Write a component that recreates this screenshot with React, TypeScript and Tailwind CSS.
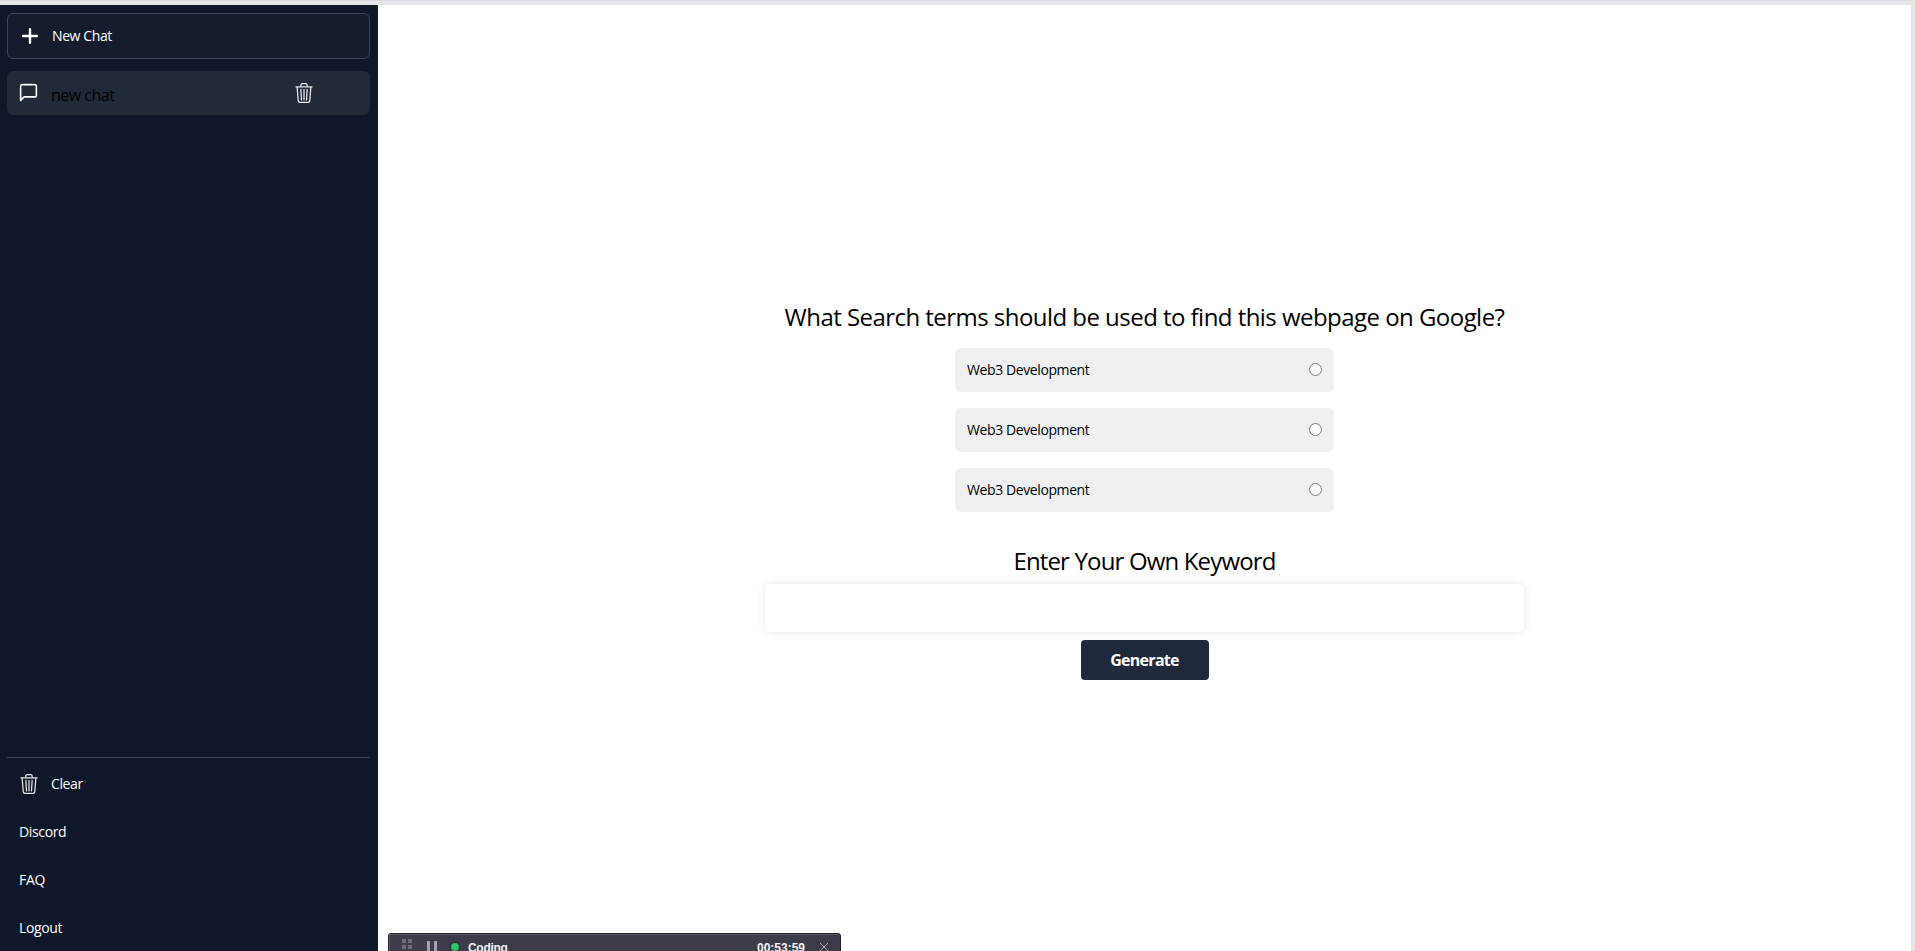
import React from "react";
import { BsTrash3 } from "react-icons/bs";
import { FiMessageSquare } from "react-icons/fi";

const links = ["Discord", "FAQ", "Logout"];
const keywords = ["Web3 Development", "Web3 Development", "Web3 Development"];

function PlusIcon() {
  return (
    <svg className="size-4" viewBox="0 0 16 16" stroke="currentColor" strokeWidth="2.4" strokeLinecap="round">
      <path d="M8 1.2V14.8M1.2 8H14.8" />
    </svg>
  );
}

function Sidebar() {
  return (
    <aside className="flex w-[378px] shrink-0 flex-col bg-[#0f172a] pl-[7px] pr-2 pt-2 text-sm text-white">
      <button className="flex h-[46px] shrink-0 items-center gap-[14px] rounded-md border border-[#3c4454] bg-[#141c2e] pl-[14px]">
        <PlusIcon />
        <span className="tracking-[-0.4px]">New Chat</span>
      </button>
      <div className="mt-3 flex h-11 shrink-0 items-center rounded-md bg-[#202a38] pl-[11px] pr-14">
        <FiMessageSquare className="mb-px size-[21px]" strokeWidth={1.8} />
        <span className="ml-3 mt-1 text-base tracking-[-0.5px] text-black">new chat</span>
        <BsTrash3 className="ml-auto size-5 text-gray-200" />
      </div>
      <nav className="mt-auto flex h-[194px] shrink-0 flex-col border-t border-[#3c4454] pl-3 pt-[2px]">
        <div className="flex h-12 shrink-0 items-center gap-[12px]">
          <BsTrash3 className="size-5 text-gray-200" />
          <span className="tracking-[-0.4px]">Clear</span>
        </div>
        {links.map((l) => (
          <div key={l} className="flex h-12 shrink-0 items-center tracking-[-0.35px]">
            {l}
          </div>
        ))}
      </nav>
    </aside>
  );
}

function TimerBar() {
  return (
    <div className="absolute left-[388px] top-[933px] flex h-7 w-[453px] items-center rounded-[3px] border border-[#232235] bg-[#3c3c4a] px-3 font-['Liberation_Sans'] text-xs font-bold text-gray-100 shadow-[inset_0_1px_0_#5c5b6c,inset_1px_0_0_#5c5b6c]">
      <div className="ml-px grid grid-cols-2 gap-[2px]">
        {[0, 1, 2, 3, 4, 5].map((i) => (
          <span key={i} className="size-1 bg-[#6c6c78]" />
        ))}
      </div>
      <div className="ml-[15px] flex gap-1">
        <span className="h-3 w-[3px] bg-[#a3a3ab]" />
        <span className="h-3 w-[3px] bg-[#a3a3ab]" />
      </div>
      <span className="ml-3 size-3 rounded-full border-2 border-[#30303f] bg-[#2cc36b]" />
      <span className="ml-[7px] mt-0.5 tracking-[-0.3px]">Coding</span>
      <span className="ml-auto mt-0.5">00:53:59</span>
      <svg className="ml-[15px] size-2" viewBox="0 0 8 8" stroke="#a3a3ab" strokeWidth="1">
        <path d="M0 0L8 8M8 0L0 8" />
      </svg>
    </div>
  );
}

export default function App() {
  return (
    <div className="relative flex h-screen flex-col overflow-hidden bg-[#e5e6ea] font-['Open_Sans',sans-serif]">
      <div className="h-[5px] shrink-0 border-t border-[#dadbdf]" />
      <div className="flex min-h-0 flex-1 pr-1">
        <Sidebar />
        <main className="flex flex-1 flex-col items-center bg-white pt-[296px] text-black">
          <h1 className="whitespace-nowrap text-2xl tracking-[-0.54px]">
            What Search terms should be used to find this webpage on Google?
          </h1>
          <div className="mt-[15px] flex flex-col gap-4">
            {keywords.map((k, i) => (
              <label key={i} className="flex h-11 w-[379px] items-center justify-between rounded-md bg-[#eff0f2] px-3 text-sm">
                <span className="tracking-[-0.4px]">{k}</span>
                <input type="radio" name="keyword" className="mb-px size-[13px]" />
              </label>
            ))}
          </div>
          <h2 className="mt-[33px] whitespace-nowrap text-2xl tracking-[-0.84px]">Enter Your Own Keyword</h2>
          <input className="mt-[7px] h-12 w-[759px] shrink-0 rounded-md bg-white px-4 shadow-[0_0_10px_rgba(0,0,0,0.1)] outline-none" />
          <button className="mt-2 h-10 w-32 shrink-0 rounded bg-[#1e293b] text-base font-bold tracking-[-0.7px] text-white">
            Generate
          </button>
        </main>
      </div>
      <TimerBar />
    </div>
  );
}
